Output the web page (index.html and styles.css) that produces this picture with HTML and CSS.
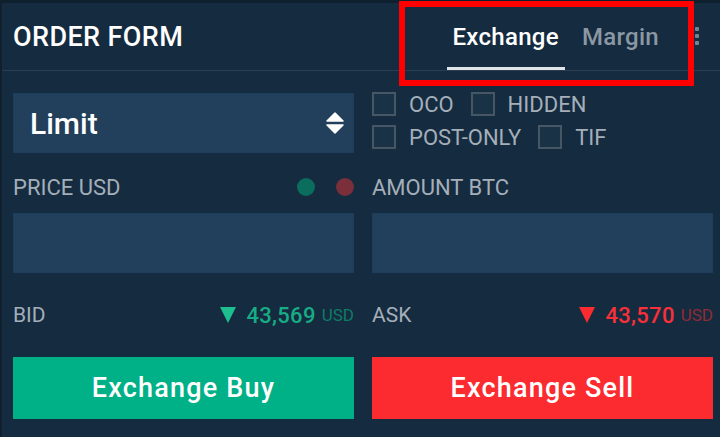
FILE: index.html
```html
<!DOCTYPE html>
<html>
<head>
<meta charset="utf-8">
<link rel="stylesheet" href="styles.css">
</head>
<body>
<div class="panel">
  <header class="head">
    <div class="title">ORDER FORM</div>
    <nav class="tabs">
      <div class="tab active">Exchange</div>
      <div class="tab">Margin</div>
    </nav>
    <div class="kebab"><span></span><span></span><span></span></div>
  </header>

  <div class="body">
    <div class="grid">
      <div class="select">
        <span>Limit</span>
        <svg class="sort" width="18" height="22" viewBox="0 0 18 22">
          <path d="M9 1 L17 9 H1 Z" fill="#fff" stroke="#fff" stroke-width="1.5" stroke-linejoin="round"/>
          <path d="M1 13 H17 L9 21 Z" fill="#fff" stroke="#fff" stroke-width="1.5" stroke-linejoin="round"/>
        </svg>
      </div>
      <div class="checks">
        <div class="crow">
          <label class="chk"><span class="box"></span>OCO</label>
          <label class="chk"><span class="box"></span>HIDDEN</label>
        </div>
        <div class="crow">
          <label class="chk"><span class="box"></span>POST-ONLY</label>
          <label class="chk"><span class="box"></span>TIF</label>
        </div>
      </div>

      <div class="label-row">
        <span>PRICE USD</span>
        <span class="dots"><i class="dot green"></i><i class="dot red"></i></span>
      </div>
      <div class="label-row"><span>AMOUNT BTC</span></div>

      <div class="input"></div>
      <div class="input"></div>

      <div class="quote">
        <span>BID</span>
        <span class="val buy"><i class="tri"></i><b>43,569</b><small>USD</small></span>
      </div>
      <div class="quote">
        <span>ASK</span>
        <span class="val sell"><i class="tri"></i><b>43,570</b><small>USD</small></span>
      </div>

      <button class="btn buy-btn">Exchange Buy</button>
      <button class="btn sell-btn">Exchange Sell</button>
    </div>
  </div>

  <div class="annot"></div>
</div>
</body>
</html>
```

FILE: styles.css
```css
* { box-sizing: border-box; }
html, body { margin: 0; padding: 0; }
body {
  width: 720px;
  height: 437px;
  overflow: hidden;
  background: #152b3f;
  font-family: Roboto, "Liberation Sans", sans-serif;
  color: #fff;
}
.panel {
  position: relative;
  height: 437px;
  border-top: 3px solid #0e1f2d;
  border-left: 2px solid #10202f;
  background: #152b3f;
}
.head {
  display: flex;
  align-items: stretch;
  height: 68px;
  padding: 0 21px 0 11px;
  border-bottom: 1px solid #2b3f51;
}
.title {
  flex: 1;
  display: flex;
  align-items: center;
  font-size: 27px;
  font-weight: 500;
  letter-spacing: 0.4px;
  color: #fff;
}
.tabs {
  display: flex;
  gap: 11px;
}
.tab {
  display: flex;
  align-items: center;
  padding: 3px 6px 0;
  font-size: 24px;
  font-weight: 500;
  letter-spacing: 0.3px;
  color: #8b98a4;
  border-bottom: 3px solid transparent;
}
.tab.active {
  color: #fff;
  border-bottom-color: #dfe4e8;
}
.kebab {
  margin-left: 30px;
  display: flex;
  flex-direction: column;
  gap: 3px;
  padding-top: 24px;
}
.kebab span {
  width: 4px;
  height: 4px;
  background: #75838f;
  border-radius: 1px;
}
.body {
  padding: 22px 7px 0 11px;
}
.grid {
  display: grid;
  grid-template-columns: 341px 341px;
  column-gap: 18px;
}
.select {
  height: 60px;
  background: #22405b;
  border: 1px solid #1c3d5c;
  display: flex;
  align-items: center;
  justify-content: space-between;
  padding: 0 9px 0 16px;
  font-size: 30px;
  font-weight: 500;
}
.checks {
  display: flex;
  flex-direction: column;
  gap: 9px;
  margin-top: -1px;
}
.crow {
  display: flex;
  gap: 17px;
}
.chk {
  display: flex;
  align-items: center;
  gap: 13px;
  font-size: 22px;
  color: #a4afba;
  height: 24px;
}
.box {
  width: 24px;
  height: 24px;
  border: 2px solid #475664;
  background: #1a3245;
}
.label-row {
  margin-top: 23px;
  height: 22px;
  display: flex;
  align-items: center;
  justify-content: space-between;
  font-size: 22px;
  color: #a4afba;
}
.dots {
  display: flex;
  gap: 21px;
}
.dot {
  width: 18px;
  height: 18px;
  border-radius: 50%;
  display: block;
}
.dot.green { background: #0b6d5e; }
.dot.red { background: #7a2f3a; }
.input {
  margin-top: 15px;
  height: 60px;
  background: #22405b;
  border: 1px solid #1c3d5c;
}
.quote {
  margin-top: 30px;
  height: 24px;
  display: flex;
  align-items: center;
  justify-content: space-between;
  font-size: 21px;
  color: #a4afba;
}
.val {
  display: flex;
  align-items: center;
}
.val b {
  font-weight: 500;
  font-size: 22px;
  letter-spacing: 0.3px;
  margin-left: 10px;
}
.val small {
  font-size: 17px;
  margin-left: 6px;
}
.tri {
  display: block;
  width: 0;
  height: 0;
  border-left: 8px solid transparent;
  border-right: 8px solid transparent;
  border-top: 16px solid currentColor;
}
.buy { color: #18ac85; }
.buy .tri { color: #1ebf8f; }
.buy small { color: #0f7c66; }
.sell { color: #f7303a; }
.sell .tri { color: #fb2b2f; }
.sell small { color: #8f2b36; }
.btn {
  margin-top: 30px;
  height: 62px;
  border: 0;
  font-family: Roboto, "Liberation Sans", sans-serif;
  font-size: 27px;
  font-weight: 500;
  letter-spacing: 1.2px;
  color: #fff;
  padding: 0;
}
.buy-btn { background: #00b086; }
.sell-btn { background: #fb2b2f; }
.annot {
  position: absolute;
  left: 397px;
  top: -2px;
  width: 295px;
  height: 85px;
  border: 6px solid #ff0000;
}
```
